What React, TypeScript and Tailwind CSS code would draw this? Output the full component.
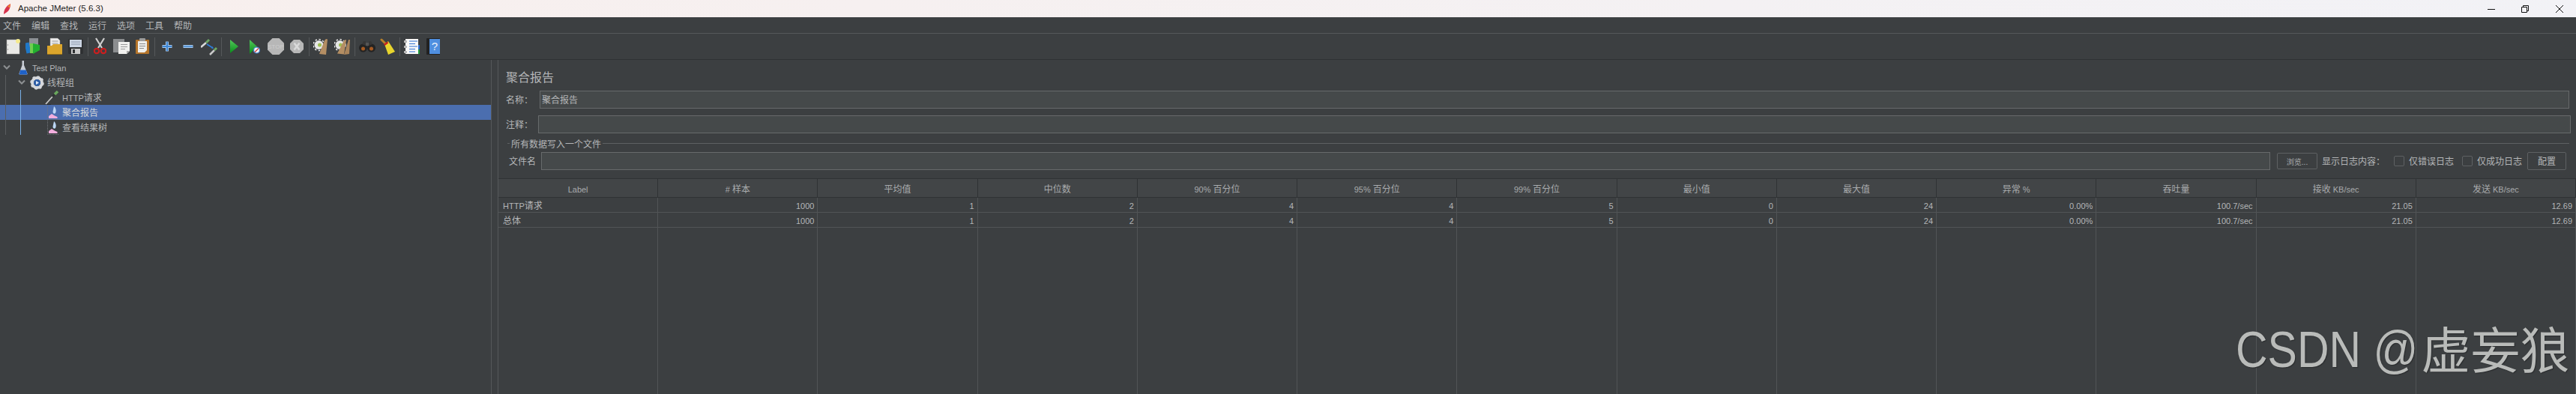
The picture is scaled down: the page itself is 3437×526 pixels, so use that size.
import React from "react";

const CJK = '"Noto Sans CJK SC","Liberation Sans",sans-serif';
const LAT = '"Liberation Sans","Noto Sans CJK SC",sans-serif';

const T = ({ children }: { children: string }) => (
  <>
    {children.split(/([\x00-\x7f]+)/).filter(Boolean).map((p, i) =>
      /^[\x00-\x7f]+$/.test(p) ? (
        <span key={i} className="text-[11px] font-['Liberation_Sans']">{p}</span>
      ) : (
        <span key={i} className="text-[12px]">{p}</span>
      )
    )}
  </>
);

const Sep = ({ cls }: { cls: string }) => <div className={`w-px h-[25px] bg-[#55585a] shrink-0 ${cls}`} />;
const TB = ({ w, cls, children }: { w: number; cls: string; children: React.ReactNode }) => (
  <svg width={w} height={24} viewBox={`0 0 ${w} 24`} className={`shrink-0 ${cls}`}>{children}</svg>
);

const Toolbar = () => (
  <div className="h-[36px] shrink-0 flex items-center pl-[8px] border-t border-b border-t-[#55585a] border-b-[#2f3234]">
    {/* new */}
    <TB w={19} cls="">
      <rect x="1" y="3" width="17" height="19" fill="#e9e9e6" stroke="#a9a9a6" strokeWidth=".5" />
      <circle cx="2.500" cy="10" r=".7" fill="#888" /><circle cx="2.500" cy="16" r=".7" fill="#888" />
      <circle cx="16" cy="5" r="3" fill="#f5ea8e" />
    </TB>
    {/* templates */}
    <TB w={19} cls="ml-[7px]">
      <rect x="5" y="1" width="12" height="12" fill="#8d9195" />
      <rect x="0" y="7" width="6" height="14" fill="#1f78c8" transform="rotate(-12 3 14)" />
      <rect x="6" y="8" width="5" height="13" fill="#6fcf4f" />
      <path d="M10 8l9 2v7l-9 5z" fill="#22b02f" />
    </TB>
    {/* open */}
    <TB w={20} cls="ml-[10px]">
      <path d="M4 1h10l3 3v10H4z" fill="#ececec" stroke="#8a8a8a" strokeWidth=".5" />
      <path d="M6.500 5h8M6.500 8h8" stroke="#999" />
      <path d="M0 11h6l2-2h12v13a1 1 0 0 1-1 1H1a1 1 0 0 1-1-1z" fill="#dba52c" />
      <path d="M0 22h20v1H0z" fill="#96701a" />
    </TB>
    {/* save */}
    <TB w={20} cls="ml-[8px]">
      <rect x="0" y="2" width="20" height="20" rx="1.500" fill="#2f3133" />
      <rect x="2" y="3" width="16" height="10" fill="#cdd6e4" />
      <path d="M4 6h12M4 9h12" stroke="#8f9cb0" />
      <rect x="4" y="15" width="12" height="7" fill="#c9c9c9" />
      <rect x="6" y="16" width="3" height="5" fill="#2f3133" />
    </TB>
    <Sep cls="ml-[6px]" />
    {/* cut */}
    <TB w={17} cls="ml-[7px]">
      <path d="M3 1l8 13M14 1L6 14" stroke="#cfcfcf" strokeWidth="2.200" />
      <circle cx="4" cy="18" r="3.200" fill="none" stroke="#cb1f1f" strokeWidth="2.200" />
      <circle cx="13" cy="18" r="3.200" fill="none" stroke="#cb1f1f" strokeWidth="2.200" />
    </TB>
    {/* copy */}
    <TB w={22} cls="ml-[9px]">
      <rect x="0" y="2" width="15" height="18" fill="#8b8d8f" />
      <path d="M7 6h15v12l-4 4H7z" fill="#f0f0ee" />
      <path d="M18 22v-4h4z" fill="#a9a9a9" />
      <path d="M10 9.500h9M10 12.500h9M10 15.500h6" stroke="#9a9a9a" />
    </TB>
    {/* paste */}
    <TB w={18} cls="ml-[8px]">
      <rect x="0" y="3" width="18" height="19" rx="1" fill="#b4742a" />
      <path d="M3 5h12v12l-3 3H3z" fill="#efefec" />
      <rect x="5" y="1" width="8" height="4" rx="1" fill="#9d9d9d" />
      <path d="M5 8.500h8M5 11.500h8M5 14.500h6" stroke="#8a8a8a" />
    </TB>
    <Sep cls="ml-[7px]" />
    <TB w={14} cls="ml-[9px]">
      <path d="M7 5.500v13M.5 12h13" stroke="#a6c8ec" strokeWidth="4" />
      <path d="M7 6v12M1 12h12" stroke="#3f86d2" strokeWidth="2" />
    </TB>
    <TB w={14} cls="ml-[14px]">
      <path d="M.5 12h13" stroke="#a6c8ec" strokeWidth="4" />
      <path d="M1 12h12" stroke="#5b97d6" strokeWidth="2" />
    </TB>
    {/* toggle */}
    <TB w={22} cls="ml-[10px]">
      <path d="M0 13l7-6" stroke="#d9d9d9" strokeWidth="2.500" />
      <path d="M7 7l4-4" stroke="#6ea765" strokeWidth="3" />
      <path d="M8 9l8 5" stroke="#2e7fdc" strokeWidth="1.500" />
      <path d="M17 15l-3-.5 1.500-2.500z" fill="#2e7fdc" />
      <path d="M12 23l6-6" stroke="#c9c9c9" strokeWidth="2.500" />
      <path d="M18 17l3-3" stroke="#6ea765" strokeWidth="3" />
    </TB>
    <Sep cls="ml-[5px]" />
    <TB w={11} cls="ml-[11px]">
      <defs><linearGradient id="pg" x1="0" y1="0" x2="0" y2="1"><stop offset="0" stopColor="#52c95a" /><stop offset="1" stopColor="#0b8c1c" /></linearGradient></defs>
      <path d="M0 3l11 9-11 9z" fill="url(#pg)" />
    </TB>
    <TB w={14} cls="ml-[15px]">
      <path d="M0 3l10 9-10 10z" fill="url(#pg)" />
      <circle cx="9.500" cy="17" r="4" fill="#f2f2f2" stroke="#3b7fd0" strokeWidth="1.200" />
      <path d="M7 19.500l5-5" stroke="#d13a3a" strokeWidth="1.300" />
    </TB>
    {/* stop */}
    <TB w={22} cls="ml-[10px]">
      <path d="M6.500 1h9L22 7.500v9L15.500 23h-9L0 16.500v-9z" fill="#b7b7b7" />
      <text x="11" y="15" textAnchor="middle" fontSize="8" fill="#cdcdcd" fontFamily="Liberation Sans">STOP</text>
    </TB>
    {/* shutdown */}
    <TB w={18} cls="ml-[8px]">
      <path d="M5 3h8l5 5v8l-5 5H5l-5-5V8z" fill="#b7b7b7" />
      <path d="M5.500 7.500l7 9M12.500 7.500l-7 9" stroke="#dadada" strokeWidth="2.500" />
    </TB>
    <Sep cls="ml-[7px]" />
    {/* clear */}
    <TB w={20} cls="ml-[5px]">
      <circle cx="7.500" cy="10" r="6" fill="#e6e6e6" />
      <circle cx="7.500" cy="10" r="7.500" fill="none" stroke="#e6e6e6" strokeWidth="1.500" strokeDasharray="2.500 2.500" />
      <circle cx="8.500" cy="10" r="2.500" fill="#9ec052" />
      <path d="M15 4l2-2 2 .5-2 20.500-9-1z" fill="#b48e63" />
    </TB>
    <TB w={22} cls="ml-[8px]">
      <circle cx="7.500" cy="10" r="6" fill="#e6e6e6" />
      <circle cx="7.500" cy="10" r="7.500" fill="none" stroke="#e6e6e6" strokeWidth="1.500" strokeDasharray="2.500 2.500" />
      <circle cx="8.500" cy="10" r="2.500" fill="#9ec052" />
      <path d="M13 4l2-1 1 .5-3 19-9-1z" fill="#b48e63" />
      <path d="M19 3h2l-1 19-7 1z" fill="#a9845b" />
    </TB>
    <Sep cls="ml-[5px]" />
    {/* binoculars */}
    <TB w={22} cls="ml-[5px]">
      <circle cx="5.500" cy="14" r="5.500" fill="#232323" />
      <circle cx="16.500" cy="14" r="5.500" fill="#232323" />
      <circle cx="5.500" cy="15" r="2.500" fill="#a55a22" />
      <circle cx="16.500" cy="15" r="2.500" fill="#a55a22" />
      <path d="M4 9l2-4h3v6M18 9l-2-4h-3v6" fill="#363636" />
      <rect x="9" y="7" width="4" height="4" fill="#555" />
    </TB>
    {/* broom */}
    <TB w={21} cls="ml-[6px]">
      <path d="M2 3l6 6" stroke="#b77f2a" strokeWidth="3" strokeLinecap="round" />
      <path d="M6 9l5-4 9 14-9 4z" fill="#e8d52d" />
      <path d="M5 9l5-3.500 1.200 2L6.500 11z" fill="#c81f1f" />
    </TB>
    <Sep cls="ml-[5px]" />
    {/* log */}
    <TB w={21} cls="ml-[5px]">
      <rect x="2" y="2" width="17" height="20" fill="#fafafa" />
      <path d="M7 5h11M7 8.500h8M7 12h11M7 15.500h8M7 19h8" stroke="#2b6fd1" />
      <rect x="0" y="4" width="4" height="3" fill="#b9b9b9" /><rect x="0" y="11" width="4" height="3" fill="#b9b9b9" /><rect x="0" y="18" width="4" height="3" fill="#b9b9b9" />
      <rect x="19" y="10" width="2" height="6" fill="#2b6fd1" /><rect x="19" y="16" width="2" height="6" fill="#1e9a3c" />
    </TB>
    {/* help */}
    <TB w={18} cls="ml-[9px]">
      <rect x="0" y="1" width="18" height="22" rx="1" fill="#222" />
      <rect x="4" y="2" width="14" height="20" fill="#4f8fe0" />
      <text x="11" y="17" textAnchor="middle" fontSize="15" fill="#e8f0fb" fontFamily="Liberation Sans">?</text>
    </TB>
  </div>
);

const Chevron = () => (
  <svg width="12" height="8" viewBox="0 0 12 8" className="shrink-0">
    <path d="M2 1.500L6 5.500L10 1.500" fill="none" stroke="#8d9092" strokeWidth="2" />
  </svg>
);
const Flask = () => (
  <svg width="12" height="20" viewBox="0 0 12 20" className="shrink-0">
    <path d="M4.500 1h2.500v6l4.500 11a1 1 0 0 1-1 1.500H1.500a1 1 0 0 1-1-1.500L4.500 7z" fill="#c9ced6" />
    <path d="M2.200 13.500h7.600l1.700 6H.5z" fill="#1f62c8" />
  </svg>
);
const Gear = () => (
  <svg width="19" height="19" viewBox="0 0 19 19" className="shrink-0 -translate-x-px">
    <circle cx="9.500" cy="9.500" r="6.500" fill="none" stroke="#d6d8dc" strokeWidth="4" />
    <circle cx="9.500" cy="9.500" r="8.300" fill="none" stroke="#d6d8dc" strokeWidth="2" strokeDasharray="3.200 3.300" />
    <circle cx="9.500" cy="9.500" r="4.500" fill="#2f5fa8" />
    <path d="M8 7l4 2.500L8 12z" fill="#dfe9f7" />
  </svg>
);
const Dropper = () => (
  <svg width="19" height="19" viewBox="0 0 19 19" className="shrink-0 -translate-x-px">
    <path d="M0 18.500h8" stroke="#2c2e30" strokeWidth="1" />
    <path d="M1 18L10 8" stroke="#c9c9c9" strokeWidth="1.800" />
    <path d="M10 8l3-3" stroke="#2f3234" strokeWidth="3" />
    <path d="M13 5l4-4" stroke="#69a75c" strokeWidth="3.500" />
  </svg>
);
const Chart = () => (
  <svg width="15" height="19" viewBox="0 0 15 19" className="shrink-0">
    <path d="M.5 0v18.500H15" fill="none" stroke="#73777c" strokeDasharray="1 1" />
    <path d="M2 17v-3l4-3 4 2.500 3.500 1.500v2z" fill="#f2aede" />
    <path d="M9 1c2.500 2 3.500 6 2 9-1.500 1.500-3.500.5-3.500-2z" fill="#bcd6f5" />
  </svg>
);

const TreeRow = ({ indent, icon, label, chevron, selected }: { indent: string; icon: React.ReactNode; label: string; chevron?: boolean; selected?: boolean }) => (
  <div className={`h-5 flex items-center ${indent} ${selected ? "bg-[#4b6eaf] text-[#d5d7d9]" : "text-[#b4b6b8]"}`}>
    <div className="w-[18px] shrink-0 flex items-center">{chevron && <Chevron />}</div>
    <div className="w-[19px] shrink-0 flex justify-center">{icon}</div>
    <span className="ml-[3px] whitespace-nowrap"><T>{label}</T></span>
  </div>
);

const COLS = ["Label", "# 样本", "平均值", "中位数", "90% 百分位", "95% 百分位", "99% 百分位", "最小值", "最大值", "异常 %", "吞吐量", "接收 KB/sec", "发送 KB/sec"];
const ROWS = [
  ["HTTP请求", "1000", "1", "2", "4", "4", "5", "0", "24", "0.00%", "100.7/sec", "21.05", "12.69"],
  ["总体", "1000", "1", "2", "4", "4", "5", "0", "24", "0.00%", "100.7/sec", "21.05", "12.69"],
];
const Empty = Array.from({ length: 13 }, () => "");

const Input = ({ text, cls }: { text?: string; cls: string }) => (
  <div className={`h-6 border border-[#676a6b] bg-[#45494a] px-[2px] leading-[22px] text-[#b4b6b8] text-[12px] ${cls}`}>{text}</div>
);

export default function App() {
  return (
    <div className="w-[3437px] h-[526px] overflow-hidden flex flex-col bg-[#3c3f41] text-[12px] text-[#b4b6b8] relative" style={{ fontFamily: CJK }}>
      <div className="h-[23px] shrink-0 flex items-center bg-gradient-to-r from-[#f8efed] to-[#f2f2f6] text-[#222]">
        <svg width="12" height="16" viewBox="0 0 12 16" className="ml-[4px] shrink-0">
          <path d="M1 15C1 9 4 4 10 1c0 5-2 10-6 12z" fill="#d6324b" />
          <path d="M6 5l4-4-1 5z" fill="#f08a2c" />
        </svg>
        <span className="ml-[8px] text-[11.500px]" style={{ fontFamily: LAT }}>Apache JMeter (5.6.3)</span>
        <svg width="102" height="20" viewBox="0 0 102 20" className="ml-auto mr-[16px]" fill="none" stroke="#111">
          <path d="M0 10.500H10" />
          <path d="M45.500 7.500h7v7h-7zM47.500 7.500v-2h7v7h-2" />
          <path d="M91 5l10 10M101 5L91 15" />
        </svg>
      </div>

      <div className="h-[21px] shrink-0 flex items-center pl-1 gap-[14px] leading-none">
        {["文件", "编辑", "查找", "运行", "选项", "工具", "帮助"].map((m) => <span key={m} className="w-6 whitespace-nowrap">{m}</span>)}
      </div>
      <Toolbar />

      <div className="flex-1 flex min-h-0">
        <div className="w-[655px] shrink-0 relative">
          <TreeRow indent="pl-[3px]" chevron icon={<Flask />} label="Test Plan" />
          <TreeRow indent="pl-[23px]" chevron icon={<Gear />} label="线程组" />
          <TreeRow indent="pl-[43px]" icon={<Dropper />} label="HTTP请求" />
          <TreeRow indent="pl-[43px]" selected icon={<Chart />} label="聚合报告" />
          <TreeRow indent="pl-[43px]" icon={<Chart />} label="查看结果树" />
          <div className="absolute left-[7px] top-[20px] h-[80px] w-px bg-[#5a5d5f]" />
          <div className="absolute left-[27px] top-[40px] h-[60px] w-px bg-[#7ab1e8]" />
        </div>
        <div className="w-[10px] shrink-0 border-l border-r border-[#55585a]" />
        <div className="flex-1 min-w-0 flex flex-col">
          <div className="pl-[10px] pr-[9px] pt-[10px]">
            <div className="text-[16px] leading-[24px] h-[24px]">聚合报告</div>
            <div className="mt-[7px] flex items-center h-6">
              <div className="w-[45px] shrink-0 whitespace-nowrap">名称：</div>
              <Input text="聚合报告" cls="flex-1" />
            </div>
            <div className="mt-[9px] mr-[-2px] flex items-center h-6">
              <div className="w-[43px] shrink-0 whitespace-nowrap">注释：</div>
              <Input cls="flex-1" />
            </div>
            <div className="relative mt-[4px] h-[20px]">
              <div className="absolute left-[2px] right-0 top-[9px] h-px bg-[#5e6163]" />
              <span className="absolute left-[5px] top-[1px] px-[2px] bg-[#3c3f41] leading-[18px] whitespace-nowrap">所有数据写入一个文件</span>
            </div>
            <div className="flex items-center h-6 mt-[1px]">
              <div className="w-[47px] pl-[4px] shrink-0 whitespace-nowrap">文件名</div>
              <Input cls="flex-1" />
              <div className="w-[54px] h-[22px] ml-[9px] shrink-0 border border-[#5e6163] rounded-[2px] flex items-center justify-center text-[10px] text-[#a9abad]">浏览...</div>
              <span className="ml-[6px] w-[96px] shrink-0 whitespace-nowrap">显示日志内容：</span>
              <div className="w-[14px] h-[14px] shrink-0 border border-[#5e6163] rounded-[2px]" />
              <span className="ml-[6px] w-[60px] shrink-0 whitespace-nowrap">仅错误日志</span>
              <div className="w-[14px] h-[14px] ml-[11px] shrink-0 border border-[#5e6163] rounded-[2px]" />
              <span className="ml-[6px] w-[60px] shrink-0 whitespace-nowrap">仅成功日志</span>
              <div className="w-[52px] h-6 ml-[7px] mr-[4px] shrink-0 border border-[#5e6163] rounded-[2px] flex items-center justify-center">配置</div>
            </div>
          </div>
          <div className="mt-[11px] flex-1 min-h-0 grid grid-cols-[repeat(13,1fr)] grid-rows-[26px_20px_20px_1fr]">
            {COLS.map((c) => (
              <div key={c} className="bg-[#424547] border-t border-b border-r border-[#2f3234] pt-[2px] flex items-center justify-center whitespace-nowrap text-[#a9abad]"><span><T>{c}</T></span></div>
            ))}
            {ROWS.flat().map((v, i) => (
              <div key={i} className={`border-b border-r border-[#515456] pt-px flex items-center whitespace-nowrap text-[#b4b6b8] ${i % 13 === 0 ? "justify-start pl-[6px]" : "justify-end pr-[4px]"}`}><span><T>{v}</T></span></div>
            ))}
            {Empty.map((_, i) => <div key={i} className="border-r border-[#515456]" />)}
          </div>
        </div>
      </div>

      <div className="absolute left-[2983px] top-[430px] text-[#b9bbb9] leading-[66px] whitespace-nowrap [text-shadow:1px_1px_1px_#2a2c2e]" style={{ fontFamily: LAT }}>
        <span className="inline-block origin-bottom scale-y-[1.15] text-[59px]">CSDN @</span>
        <span className="ml-[4px] text-[66px]" style={{ fontFamily: CJK }}>虚妄狼</span>
      </div>
    </div>
  );
}
